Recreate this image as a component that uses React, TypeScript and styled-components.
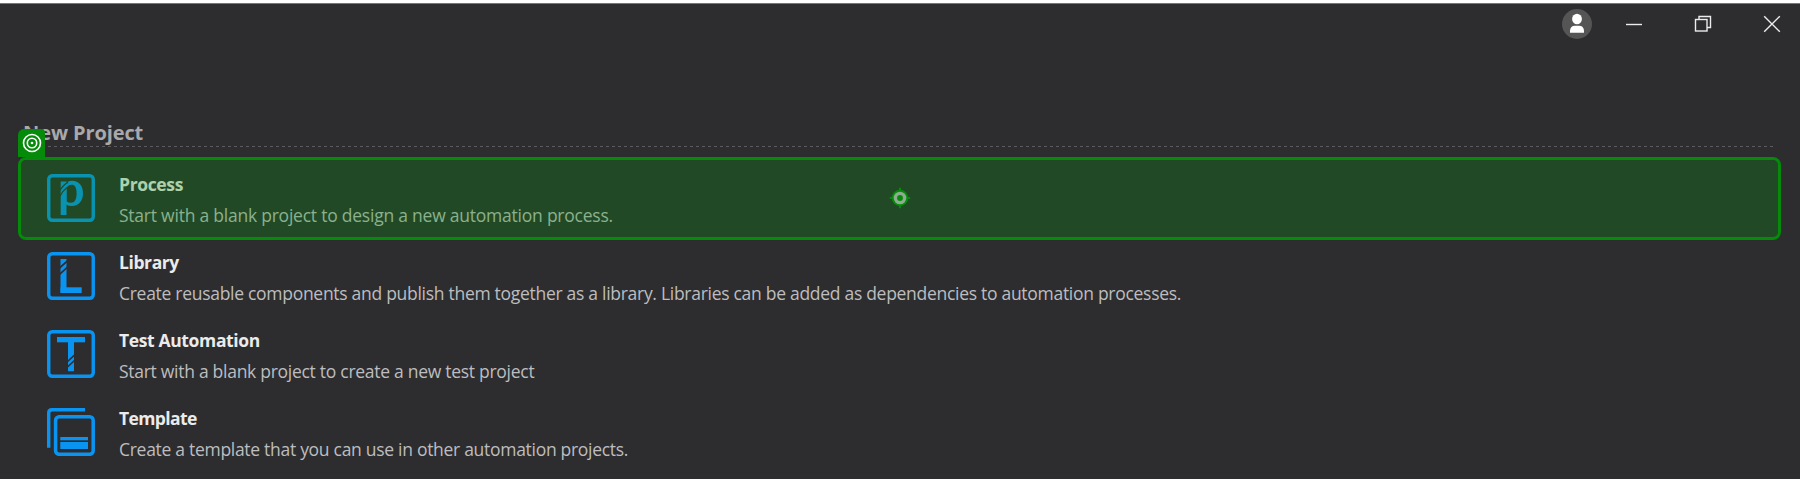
import React from 'react';
import styled, { createGlobalStyle } from 'styled-components';

const BG = '#2d2d30';
const BLUE = '#0a94f2';
const GREEN = '#058a09';

const GlobalStyle = createGlobalStyle`
  body {
    margin: 0;
    background: ${BG};
    font-family: "Open Sans", "Noto Sans", sans-serif;
  }
`;

const Window = styled.div`
  box-sizing: border-box;
  height: 479px;
  overflow: hidden;
  background: ${BG};
  border-top: 3px solid #fdfdfd;
`;

const TitleBar = styled.header`
  box-sizing: border-box;
  display: flex;
  justify-content: flex-end;
  align-items: center;
  gap: 49px;
  height: 41px;
  padding-right: 18px;
  border-top: 1px solid #77777a;
`;

const WindowButtons = styled.div`
  display: flex;
  gap: 49px;
  margin-left: -17px;
`;

const Avatar = styled.svg`
  display: block;
  width: 30px;
  height: 30px;
`;

const WindowButton = styled.svg`
  display: block;
  width: 20px;
  height: 20px;
  fill: none;
  stroke: #ececec;
  stroke-width: 1.4;
`;

const Section = styled.main`
  padding: 74px 24px 0 23px;
`;

const SectionHeader = styled.h2`
  margin: 0;
  height: 28px;
  line-height: 30px;
  font-size: 20px;
  font-weight: 700;
  letter-spacing: -0.1px;
  color: #a9a9ab;
`;

const Divider = styled.div`
  height: 1px;
  background: repeating-linear-gradient(90deg, transparent 0 1px, #5c5c5f 1px 4px, transparent 4px 6px);
`;

const ProjectList = styled.div`
  display: flex;
  flex-direction: column;
  padding: 12px 0 0 1px;
`;

const ProjectRow = styled.div`
  position: relative;
  box-sizing: border-box;
  display: flex;
  height: 78px;
  padding: 10px 0 0 23px;
  gap: 24px;
`;

const ProjectIcon = styled.svg`
  flex: none;
  width: 48px;
  height: 48px;
  margin-top: 5px;
  fill: ${BLUE};
`;

const Caption = styled.div`
  white-space: nowrap;
  font-size: 17.5px;
  line-height: 31px;
`;

const Name = styled.div<{ $tracking: number }>`
  font-weight: 700;
  color: #ebebeb;
  letter-spacing: ${(p) => p.$tracking}px;
`;

const Description = styled.div<{ $tracking: number }>`
  color: #bdbdbf;
  letter-spacing: ${(p) => p.$tracking}px;
`;

const Highlight = styled.div`
  position: absolute;
  box-sizing: border-box;
  inset: -2.5px -5px -3px -6px;
  display: flex;
  align-items: center;
  justify-content: center;
  border: 3px solid ${GREEN};
  border-radius: 8px;
  background: rgba(6, 148, 12, 0.28);
  background-clip: padding-box;
`;

const TargetBadge = styled.div`
  position: absolute;
  left: -3px;
  top: -31px;
  display: flex;
  align-items: center;
  justify-content: center;
  width: 27px;
  height: 28px;
  border-radius: 6px 4px 0 0;
  background: ${GREEN};
`;

const BadgeIcon = styled.svg`
  width: 20px;
  height: 20px;
  fill: none;
  stroke: #fff;
`;

const CenterMark = styled.svg`
  width: 22px;
  height: 22px;
`;

const Frame = () => (
  <rect x="1.75" y="1.75" width="44.5" height="44.5" rx="3.5" fill="none" stroke={BLUE} strokeWidth="3.4" />
);

const ProcessArt = () => (
  <>
    <Frame />
    <mask id="process-cuts">
      <rect width="48" height="48" fill="#fff" />
      <path d="M13 16.2 Q17 10.2 21 8.4 M13 22.2 Q16 16.5 20 13.6" fill="none" stroke="#000" strokeWidth="1.2" />
    </mask>
    <g mask="url(#process-cuts)">
      <rect x="13.7" y="7.5" width="5.8" height="33.5" />
      <path
        fillRule="evenodd"
        d="M17 11 Q20.5 6.8 25 6.8 C32 6.8 36 12 36 19.3 C36 27 31.5 32 25 32 Q21.5 32 19 30.4 L17 28Z M19.5 14 V27.2 Q21.2 28.8 23.8 28.8 C27.8 28.8 29.6 25.5 29.6 19.3 C29.6 13.2 27.8 10.7 24.5 10.7 Q21.5 10.7 19.5 14Z"
      />
    </g>
  </>
);

const LibraryArt = () => (
  <>
    <Frame />
    <mask id="library-cuts">
      <rect width="48" height="48" fill="#fff" />
      <path d="M12.5 16 L20.5 8.8 M12.5 22.4 L20.5 15.2" stroke="#000" strokeWidth="1.7" />
    </mask>
    <g mask="url(#library-cuts)">
      <rect x="13.5" y="7" width="6" height="34" />
      <rect x="13.5" y="35.3" width="21.2" height="5.7" />
    </g>
  </>
);

const TestArt = () => (
  <>
    <Frame />
    <mask id="test-cuts">
      <rect width="48" height="48" fill="#fff" />
      <path d="M20 32 L28 24.6 M20 37.4 L28 30" stroke="#000" strokeWidth="1.6" />
    </mask>
    <g mask="url(#test-cuts)">
      <rect x="10" y="7" width="28" height="5.3" />
      <rect x="21" y="7" width="6" height="34.2" />
    </g>
  </>
);

const TemplateArt = () => (
  <>
    <path d="M1.7 39.7 V5 Q1.7 1.7 5 1.7 H38" fill="none" stroke={BLUE} strokeWidth="3.4" />
    <rect x="8.6" y="8.7" width="37.6" height="37.6" rx="3.5" fill="none" stroke={BLUE} strokeWidth="3.5" />
    <rect x="13.3" y="29" width="27.7" height="3.3" />
    <rect x="13.3" y="34" width="27.7" height="7" />
  </>
);

interface Project {
  name: string;
  nameTracking: number;
  description: string;
  tracking: number;
  Art: () => React.JSX.Element;
  selected?: boolean;
}

const projects: Project[] = [
  {
    name: 'Process',
    nameTracking: -0.35,
    description: 'Start with a blank project to design a new automation process.',
    tracking: -0.23,
    Art: ProcessArt,
    selected: true,
  },
  {
    name: 'Library',
    nameTracking: -0.4,
    description:
      'Create reusable components and publish them together as a library. Libraries can be added as dependencies to automation processes.',
    tracking: -0.287,
    Art: LibraryArt,
  },
  {
    name: 'Test Automation',
    nameTracking: -0.36,
    description: 'Start with a blank project to create a new test project',
    tracking: -0.28,
    Art: TestArt,
  },
  {
    name: 'Template',
    nameTracking: -0.6,
    description: 'Create a template that you can use in other automation projects.',
    tracking: -0.29,
    Art: TemplateArt,
  },
];

const SelectionHighlight = () => (
  <Highlight>
    <TargetBadge>
      <BadgeIcon viewBox="0 0 20 20">
        <circle cx="10" cy="10" r="8.5" strokeWidth="1.6" />
        <circle cx="10" cy="10" r="4.7" strokeWidth="1.6" />
        <circle cx="10" cy="10" r="1.3" fill="#fff" stroke="none" />
      </BadgeIcon>
    </TargetBadge>
    <CenterMark viewBox="0 0 22 22">
      <path d="M11 .8V21.2M.8 11H21.2" stroke={GREEN} strokeWidth="2" />
      <circle cx="11" cy="11" r="8.3" fill={GREEN} />
      <circle cx="11" cy="11" r="6.3" fill="#8fab91" />
      <circle cx="11" cy="11" r="2.9" fill={GREEN} />
    </CenterMark>
  </Highlight>
);

export default function App() {
  return (
    <Window>
      <GlobalStyle />
      <TitleBar>
        <Avatar viewBox="0 0 30 30">
          <circle cx="15" cy="15" r="15" fill="#555556" />
          <ellipse cx="15" cy="10" rx="4.9" ry="5.2" fill="#fff" />
          <path d="M8 23.7V21.5Q8.4 16.8 13 16.8H17Q21.6 16.8 22 21.5V23.7Z" fill="#fff" />
        </Avatar>
        <WindowButtons>
          <WindowButton viewBox="0 0 20 20">
            <path d="M2 10.5H18" />
          </WindowButton>
          <WindowButton viewBox="0 0 20 20">
            <rect x="2.5" y="5.5" width="11.5" height="11.5" />
            <path d="M6 5.5V2.5H17.5V13.5H14" />
          </WindowButton>
          <WindowButton viewBox="0 0 20 20">
            <path d="M2.2 2.2L17.8 17.8M17.8 2.2L2.2 17.8" />
          </WindowButton>
        </WindowButtons>
      </TitleBar>
      <Section>
        <SectionHeader>New Project</SectionHeader>
        <Divider />
        <ProjectList>
          {projects.map(({ name, nameTracking, description, tracking, Art, selected }) => (
            <ProjectRow key={name}>
              <ProjectIcon viewBox="0 0 48 48">
                <Art />
              </ProjectIcon>
              <Caption>
                <Name $tracking={nameTracking}>{name}</Name>
                <Description $tracking={tracking}>{description}</Description>
              </Caption>
              {selected && <SelectionHighlight />}
            </ProjectRow>
          ))}
        </ProjectList>
      </Section>
    </Window>
  );
}
